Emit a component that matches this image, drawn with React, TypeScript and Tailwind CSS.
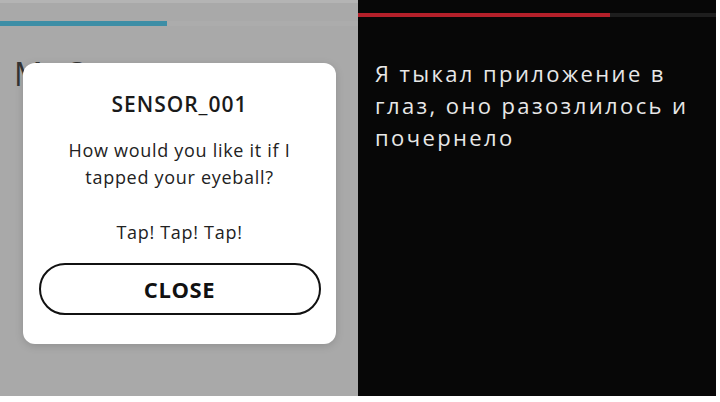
import React from "react";

function SensorDialog() {
  return (
    <div className="absolute left-[23px] top-[63px] w-[313px] h-[281px] bg-white rounded-[12px] shadow-[0_2px_8px_rgba(0,0,0,0.15)] flex flex-col items-center [font-family:'Open_Sans',sans-serif] text-[#1a1a1a]">
      <div className="mt-[27px] text-[21px] font-semibold leading-[28px] tracking-[1px]">SENSOR_001</div>
      <div className="mt-[19px] text-[18px] leading-[27px] text-center text-[#222] tracking-[0.7px]">
        How would you like it if I
        <br />
        tapped your eyeball?
      </div>
      <div className="mt-[28px] text-[18px] leading-[26px] text-[#222] tracking-[0.7px]">Tap! Tap! Tap!</div>
      <button className="mt-[18px] w-[282px] h-[52px] rounded-full border-[2.5px] border-[#111] flex items-center justify-center text-[22px] font-bold tracking-[0.6px] text-[#111]">
        CLOSE
      </button>
    </div>
  );
}

export default function App() {
  return (
    <div className="w-[720px] h-[402px] bg-white flex flex-col">
      <div className="flex h-[396px] w-[716px]">
        {/* dimmed app screen with modal */}
        <div className="relative w-[358px] h-full bg-[#a9a9a9] flex flex-col overflow-hidden">
          <div className="h-[3px] bg-[#b4b4b4]" />
          <div className="mt-[18px] flex h-[5px]">
            <div className="w-[167px] bg-[#3d8ea6]" />
            <div className="flex-1 bg-[#acacac]" />
          </div>
          <div className="mt-[30px] pl-[14px] text-[32px] leading-[36px] text-[#333] [font-family:'Open_Sans',sans-serif]">
            My Sensors
          </div>
          <SensorDialog />
        </div>
        {/* blacked-out app screen */}
        <div className="w-[358px] h-full bg-[#070707] flex flex-col">
          <div className="mt-[13px] flex h-[4px]">
            <div className="w-[252px] bg-[#b3202a]" />
            <div className="flex-1 bg-[#1e1e1e]" />
          </div>
          <div className="mt-[40px] pl-[17px] text-[22px] leading-[32px] font-normal text-[#e8e8e8] [font-family:'Open_Sans',sans-serif] tracking-[2.4px] whitespace-nowrap">
            Я тыкал приложение в
            <br />
            глаз, оно разозлилось и
            <br />
            почернело
          </div>
        </div>
      </div>
    </div>
  );
}
